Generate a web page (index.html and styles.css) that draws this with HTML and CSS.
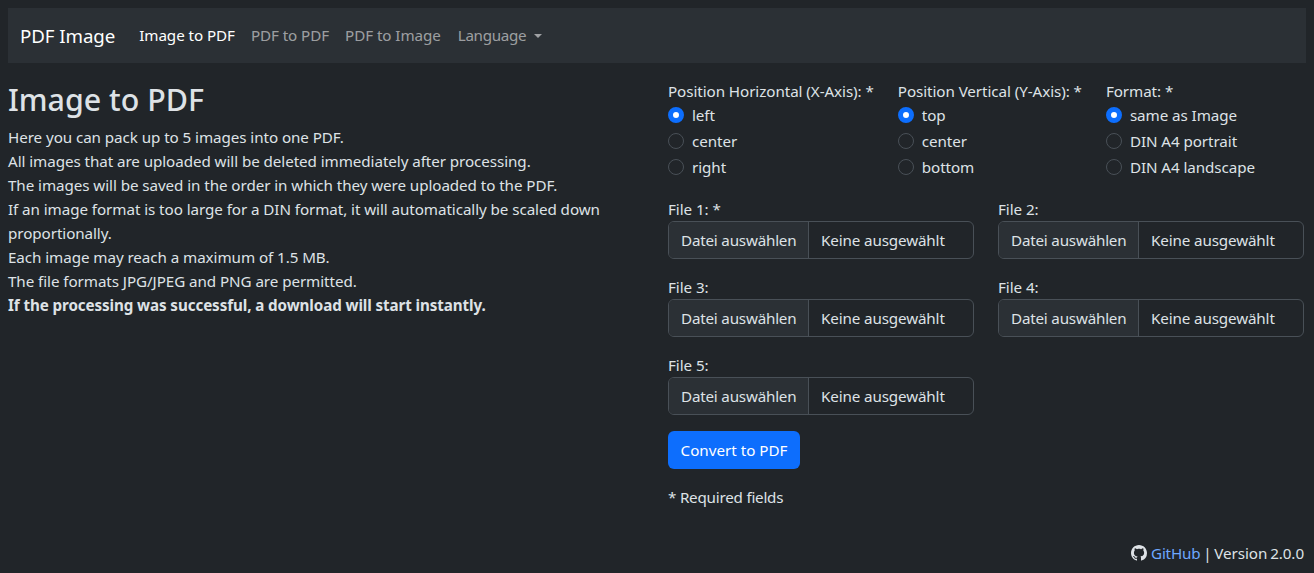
FILE: index.html
```html
<!DOCTYPE html>
<html lang="de">
  <head>
    <meta charset="UTF-8" />
    <meta name="viewport" content="width=device-width, initial-scale=1.0" />
    <title>PDF Image</title>
    <link rel="stylesheet" href="styles.css">
  </head>
  <body>
    <nav class="navbar">
      <a class="brand" href="#">PDF Image</a>
      <a class="nav-link active" href="#">Image to PDF</a>
      <a class="nav-link" href="#">PDF to PDF</a>
      <a class="nav-link" href="#">PDF to Image</a>
      <a class="nav-link dropdown" href="#">Language</a>
    </nav>

    <main class="content">
      <section class="intro">
        <h2>Image to PDF</h2>
        <p>Here you can pack up to 5 images into one PDF.</p>
        <p>All images that are uploaded will be deleted immediately after processing.</p>
        <p>The images will be saved in the order in which they were uploaded to the PDF.</p>
        <p>If an image format is too large for a DIN format, it will automatically be scaled down proportionally.</p>
        <p>Each image may reach a maximum of 1.5 MB.</p>
        <p>The file formats JPG/JPEG and PNG are permitted.</p>
        <p><b>If the processing was successful, a download will start instantly.</b></p>
      </section>

      <form class="upload">
        <div class="radio-row">
          <fieldset class="radio-group">
            <legend>Position Horizontal (X-Axis): *</legend>
            <label class="radio"><input type="radio" name="x" checked> left</label>
            <label class="radio"><input type="radio" name="x"> center</label>
            <label class="radio"><input type="radio" name="x"> right</label>
          </fieldset>
          <fieldset class="radio-group">
            <legend>Position Vertical (Y-Axis): *</legend>
            <label class="radio"><input type="radio" name="y" checked> top</label>
            <label class="radio"><input type="radio" name="y"> center</label>
            <label class="radio"><input type="radio" name="y"> bottom</label>
          </fieldset>
          <fieldset class="radio-group">
            <legend>Format: *</legend>
            <label class="radio"><input type="radio" name="f" checked> same as Image</label>
            <label class="radio"><input type="radio" name="f"> DIN A4 portrait</label>
            <label class="radio"><input type="radio" name="f"> DIN A4 landscape</label>
          </fieldset>
        </div>

        <div class="file-grid">
          <div class="file-field">
            <div class="file-label">File 1: *</div>
            <div class="file-input"><span class="file-btn">Datei auswählen</span><span class="file-name">Keine ausgewählt</span></div>
          </div>
          <div class="file-field">
            <div class="file-label">File 2:</div>
            <div class="file-input"><span class="file-btn">Datei auswählen</span><span class="file-name">Keine ausgewählt</span></div>
          </div>
          <div class="file-field">
            <div class="file-label">File 3:</div>
            <div class="file-input"><span class="file-btn">Datei auswählen</span><span class="file-name">Keine ausgewählt</span></div>
          </div>
          <div class="file-field">
            <div class="file-label">File 4:</div>
            <div class="file-input"><span class="file-btn">Datei auswählen</span><span class="file-name">Keine ausgewählt</span></div>
          </div>
          <div class="file-field">
            <div class="file-label">File 5:</div>
            <div class="file-input"><span class="file-btn">Datei auswählen</span><span class="file-name">Keine ausgewählt</span></div>
          </div>
        </div>

        <button class="btn-primary" type="button">Convert to PDF</button>
        <p class="required">* Required fields</p>
      </form>
    </main>

    <footer class="footer">
      <svg class="github" viewBox="0 0 16 16" width="16" height="16" fill="currentColor"><path d="M8 0C3.58 0 0 3.58 0 8c0 3.54 2.29 6.53 5.47 7.59.4.07.55-.17.55-.38 0-.19-.01-.82-.01-1.49-2.01.37-2.53-.49-2.69-.94-.09-.23-.48-.94-.82-1.13-.28-.15-.68-.52-.01-.53.63-.01 1.08.58 1.23.82.72 1.21 1.87.87 2.33.66.07-.52.28-.87.51-1.07-1.78-.2-3.64-.89-3.64-3.95 0-.87.31-1.59.82-2.15-.08-.2-.36-1.02.08-2.12 0 0 .67-.21 2.2.82.64-.18 1.32-.27 2-.27.68 0 1.36.09 2 .27 1.53-1.04 2.2-.82 2.2-.82.44 1.1.16 1.92.08 2.12.51.56.82 1.27.82 2.15 0 3.07-1.87 3.75-3.65 3.95.29.25.54.73.54 1.48 0 1.07-.01 1.93-.01 2.2 0 .21.15.46.55.38A8.012 8.012 0 0 0 16 8c0-4.42-3.58-8-8-8z"/></svg>
      <a href="#">GitHub</a> | Version 2.0.0
    </footer>
  </body>
</html>
```

FILE: styles.css
```css
* {
  box-sizing: border-box;
}

html,
body {
  height: 100%;
}

body {
  margin: 0;
  padding: 8px 10px 8px 8px;
  background-color: #212529;
  color: #dee2e6;
  font-family: "Noto Sans", sans-serif;
  font-size: 15.2px;
  line-height: 24px;
  letter-spacing: -0.07px;
  overflow: hidden;
  position: relative;
}

p {
  margin: 0;
}

a {
  text-decoration: none;
}

b {
  letter-spacing: -0.1px;
}

.navbar {
  display: flex;
  align-items: center;
  height: 55px;
  margin-right: -2px;
  padding: 0 12px;
  background-color: #2b3035;
}

.brand {
  margin-right: 16px;
  color: #fff;
  font-size: 18.7px;
}

.nav-link {
  padding: 0 8px 2px;
  color: rgba(255, 255, 255, 0.55);
}

.nav-link.active {
  color: #fff;
}

.dropdown {
  margin-left: 1px;
  letter-spacing: -0.3px;
}

.dropdown::after {
  content: "";
  display: inline-block;
  margin-left: 8px;
  vertical-align: 3px;
  border-top: 4.8px solid;
  border-right: 4.8px solid transparent;
  border-left: 4.8px solid transparent;
}

.content {
  display: grid;
  grid-template-columns: 648px 636px;
  margin-top: 16px;
}

.intro {
  padding-right: 48px;
}

h2 {
  margin: 0 0 6px;
  padding-top: 2px;
  font-size: 30.4px;
  font-weight: 500;
  line-height: 38.4px;
  letter-spacing: 0;
}

.upload {
  padding-left: 12px;
}

.radio-row {
  display: flex;
  gap: 24px;
  margin-bottom: 16px;
}

.radio-group {
  min-width: 0;
  margin: 0;
  padding: 0;
  border: 0;
}

.radio-group legend {
  padding: 0;
}

.radio {
  display: flex;
  align-items: center;
  gap: 8px;
  height: 24px;
  margin-bottom: 2px;
}

.radio input {
  appearance: none;
  width: 16px;
  height: 16px;
  margin: 0;
  border: 1px solid #495057;
  border-radius: 50%;
  background-color: #212529;
}

.radio input:checked {
  border: 5px solid #0d6efd;
  background-color: #fff;
}

.file-grid {
  display: grid;
  grid-template-columns: 306px 306px;
  column-gap: 24px;
  row-gap: 16px;
  margin-bottom: 16px;
}

.file-input {
  display: flex;
  align-items: center;
  height: 38px;
  overflow: hidden;
  border: 1px solid #495057;
  border-radius: 6px;
  background-color: #212529;
  white-space: nowrap;
}

.file-btn {
  display: flex;
  align-items: center;
  flex: none;
  width: 140px;
  height: 100%;
  padding-left: 12px;
  border-right: 1px solid #495057;
  background-color: #2b3035;
  letter-spacing: -0.2px;
}

.file-name {
  padding-left: 12px;
  letter-spacing: -0.13px;
}

.btn-primary {
  display: block;
  width: 132px;
  height: 38px;
  padding: 0;
  border: 0;
  border-radius: 6px;
  background-color: #0d6efd;
  color: #fff;
  font: inherit;
  letter-spacing: 0;
}

.required {
  margin-top: 16px;
  letter-spacing: -0.22px;
}

.footer {
  position: absolute;
  right: 10px;
  bottom: 8px;
  word-spacing: -1px;
}

.footer a {
  color: #6ea8fe;
  letter-spacing: -0.2px;
}

.github {
  margin-right: 1px;
  vertical-align: -2px;
}
```
